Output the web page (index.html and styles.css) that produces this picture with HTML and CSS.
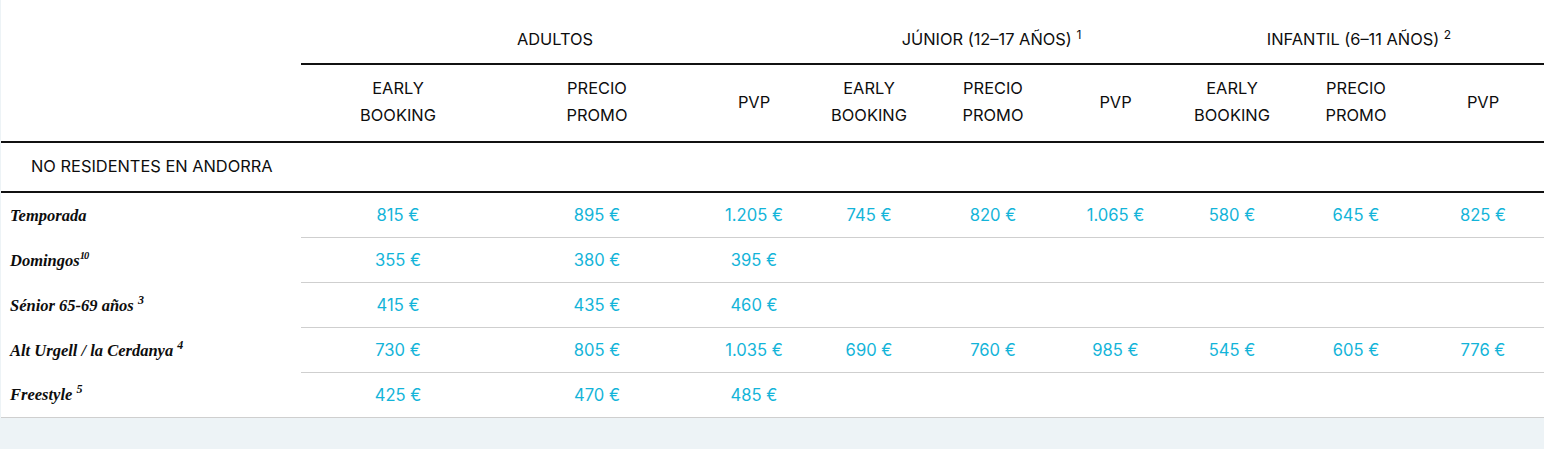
FILE: index.html
```html
<!DOCTYPE html>
<html lang="es">
<head>
<meta charset="utf-8">
<title>Tarifas</title>
<link rel="stylesheet" href="styles.css">
</head>
<body>
<div class="page">
  <table class="prices">
    <colgroup>
      <col class="c-label">
      <col class="c-a1"><col class="c-a2"><col class="c-a3">
      <col class="c-j1"><col class="c-j2"><col class="c-j3">
      <col class="c-i1"><col class="c-i2"><col class="c-i3">
    </colgroup>
    <thead>
      <tr class="groups">
        <th class="blank"></th>
        <th colspan="3" class="group">ADULTOS</th>
        <th colspan="3" class="group">JÚNIOR (12–17 AÑOS) <sup>1</sup></th>
        <th colspan="3" class="group">INFANTIL (6–11 AÑOS) <sup>2</sup></th>
      </tr>
      <tr class="subs">
        <th></th>
        <th>EARLY<br>BOOKING</th><th>PRECIO<br>PROMO</th><th>PVP</th>
        <th>EARLY<br>BOOKING</th><th>PRECIO<br>PROMO</th><th>PVP</th>
        <th>EARLY<br>BOOKING</th><th>PRECIO<br>PROMO</th><th>PVP</th>
      </tr>
    </thead>
    <tbody>
      <tr class="section">
        <td colspan="10">NO RESIDENTES EN ANDORRA</td>
      </tr>
      <tr class="row">
        <td class="label">Temporada</td>
        <td>815 €</td><td>895 €</td><td>1.205 €</td>
        <td>745 €</td><td>820 €</td><td>1.065 €</td>
        <td>580 €</td><td>645 €</td><td>825 €</td>
      </tr>
      <tr class="row">
        <td class="label">Domingos<sup class="tight">10</sup></td>
        <td>355 €</td><td>380 €</td><td>395 €</td>
        <td></td><td></td><td></td>
        <td></td><td></td><td></td>
      </tr>
      <tr class="row">
        <td class="label">Sénior 65-69 años <sup>3</sup></td>
        <td>415 €</td><td>435 €</td><td>460 €</td>
        <td></td><td></td><td></td>
        <td></td><td></td><td></td>
      </tr>
      <tr class="row">
        <td class="label">Alt Urgell / la Cerdanya <sup>4</sup></td>
        <td>730 €</td><td>805 €</td><td>1.035 €</td>
        <td>690 €</td><td>760 €</td><td>985 €</td>
        <td>545 €</td><td>605 €</td><td>776 €</td>
      </tr>
      <tr class="row last">
        <td class="label">Freestyle <sup>5</sup></td>
        <td>425 €</td><td>470 €</td><td>485 €</td>
        <td></td><td></td><td></td>
        <td></td><td></td><td></td>
      </tr>
    </tbody>
  </table>
</div>
</body>
</html>
```

FILE: styles.css
```css
html, body {
  margin: 0;
  padding: 0;
  background: #edf3f6;
}

.page {
  padding-left: 1px;
  width: 1543px;
}

.prices {
  table-layout: fixed;
  width: 1543px;
  border-collapse: separate;
  border-spacing: 0;
  background: #ffffff;
  font-family: Inter, "Liberation Sans", sans-serif;
  font-size: 16.4px;
  color: #0d0d0d;
}

.c-label { width: 300px; }
.c-a1 { width: 194px; }
.c-a2 { width: 204px; }
.c-a3 { width: 110px; }
.c-j1 { width: 120px; }
.c-j2 { width: 128px; }
.c-j3 { width: 117px; }
.c-i1 { width: 116px; }
.c-i2 { width: 132px; }
.c-i3 { width: 122px; }

.prices th,
.prices td {
  padding: 0;
  font-weight: 400;
  text-align: center;
}

.groups th {
  padding: 29px 0 14px;
  line-height: 20px;
}

.groups th.group {
  border-bottom: 2px solid #111111;
}

.groups sup {
  font-size: 12px;
  line-height: 0;
  vertical-align: 6px;
}

.subs th {
  padding: 10px 0 12px;
  line-height: 27px;
  height: 54px;
  vertical-align: middle;
  border-bottom: 2px solid #111111;
}

.section td {
  text-align: left;
  padding: 13px 0 15px 30px;
  line-height: 20px;
  border-bottom: 2px solid #111111;
}

.row td {
  height: 44px;
  line-height: 20px;
  vertical-align: middle;
  color: #13b4d9;
  font-size: 16.6px;
  border-bottom: 1px solid #cfcfcf;
}

.row td.label {
  text-align: left;
  padding-left: 9px;
  border-bottom: none;
  color: #0d0d0d;
  font-family: "Liberation Serif", "Times New Roman", serif;
  font-style: italic;
  font-weight: 700;
  font-size: 16.5px;
  letter-spacing: 0;
}

.row.last td.label {
  border-bottom: 1px solid #cfcfcf;
}

.label sup {
  font-size: 12px;
  line-height: 0;
  vertical-align: 7px;
}

.label sup.tight {
  font-size: 10.5px;
  letter-spacing: -1px;
}
```
